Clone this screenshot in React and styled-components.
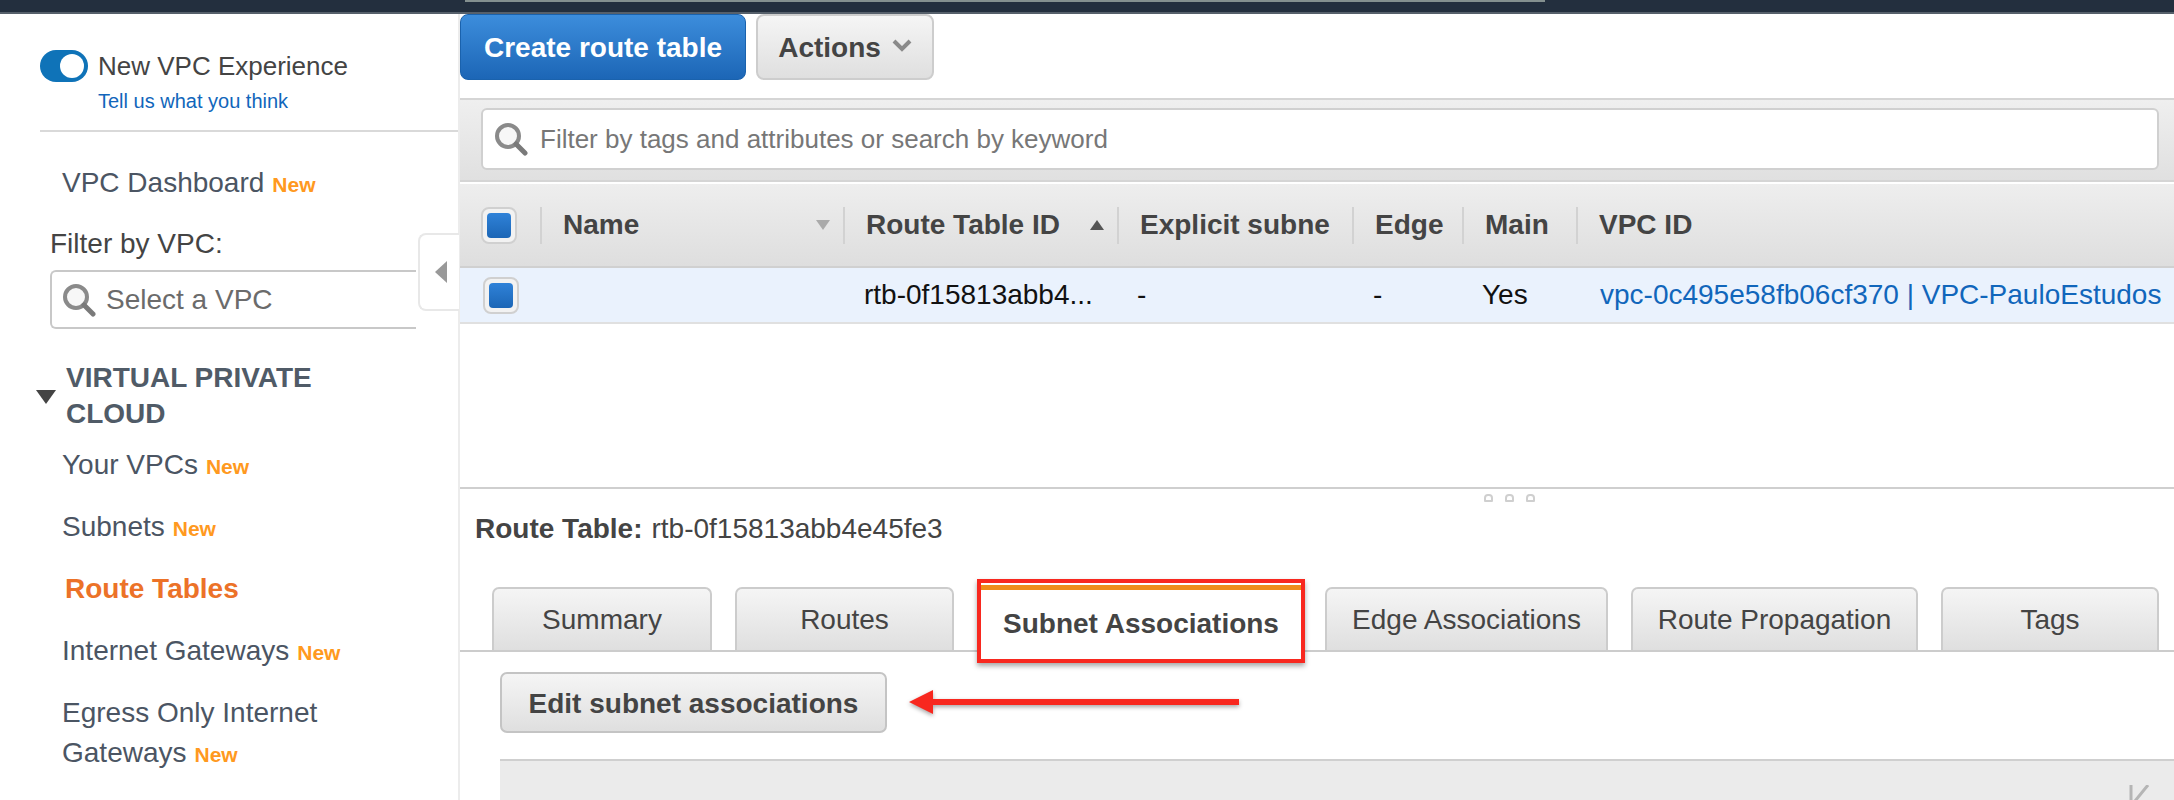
import React from "react";
import styled, { createGlobalStyle } from "styled-components";

const GlobalStyle = createGlobalStyle`
  html, body {
    margin: 0;
    padding: 0;
    background: #fff;
    font-family: "Liberation Sans", Arial, sans-serif;
  }
`;

/* Start page styling */
const Page = styled.div`
  width: 2174px;
  height: 800px;
  overflow: hidden;
  display: flex;
  flex-direction: column;
`;

const TopBar = styled.div`
  flex: none;
  height: 12px;
  background: #232f3e;
  border-bottom: 2px solid #56606b;
  display: flex;
`;

const TopBarSearch = styled.div`
  width: 1080px;
  height: 2px;
  margin-left: 465px;
  background: #84908f;
`;

const Body = styled.div`
  flex: 1;
  display: flex;
  min-height: 0;
`;

const Sidebar = styled.aside`
  flex: none;
  width: 458px;
  border-right: 2px solid #ececec;
  position: relative;
`;

const ExperienceBlock = styled.div`
  margin-left: 40px;
  padding-top: 36px;
  height: 80px;
  border-bottom: 2px solid #d9d9d9;
`;

const ToggleRow = styled.div`
  display: flex;
  align-items: center;
  gap: 10px;
`;

const Toggle = styled.span`
  width: 48px;
  height: 32px;
  border-radius: 16px;
  background: #0f73b8;
  display: flex;
  align-items: center;
  justify-content: flex-end;
  padding-right: 4px;
  box-sizing: border-box;
  &::after {
    content: "";
    width: 24px;
    height: 24px;
    border-radius: 50%;
    background: #fff;
  }
`;

const ToggleLabel = styled.span`
  font-size: 26px;
  line-height: 32px;
  color: #444;
`;

const FeedbackLink = styled.a`
  display: block;
  margin: 7px 0 0 58px;
  font-size: 20px;
  line-height: 24px;
  color: #1166bb;
`;

const NavLink = styled.div`
  margin-left: 62px;
  font-size: 28px;
  line-height: 40px;
  color: #4b5563;
  width: 360px;
`;

const NewBadge = styled.span`
  margin-left: 8px;
  font-size: 21px;
  line-height: 1;
  font-weight: bold;
  color: #ff9920;
`;

const DashboardLink = styled(NavLink)`
  margin-top: 31px;
`;

const FilterLabel = styled.div`
  margin: 21px 0 0 50px;
  font-size: 28px;
  line-height: 40px;
  color: #444;
`;

const VpcSelect = styled.div`
  margin: 6px 0 0 50px;
  width: 366px;
  height: 59px;
  box-sizing: border-box;
  border: 2px solid #c8c8c8;
  border-right: none;
  border-radius: 6px 0 0 6px;
  display: flex;
  align-items: center;
  gap: 10px;
  padding-left: 10px;
  font-size: 28px;
  color: #6b6b6b;
`;

const CollapseHandle = styled.div`
  position: absolute;
  top: 219px;
  left: 418px;
  width: 41px;
  height: 78px;
  box-sizing: border-box;
  background: #fff;
  border: 2px solid #e8e8e8;
  border-right: none;
  border-radius: 8px 0 0 8px;
  display: flex;
  align-items: center;
  justify-content: center;
  &::after {
    content: "";
    margin-left: 2px;
    border-style: solid;
    border-width: 11px 12px 11px 0;
    border-color: transparent #999 transparent transparent;
  }
`;

const SectionHeading = styled.div`
  margin-top: 31px;
  display: flex;
  align-items: center;
  gap: 10px;
  padding-left: 36px;
  font-size: 28px;
  font-weight: bold;
  line-height: 36px;
  color: #505b67;
`;

const SectionArrow = styled.span`
  flex: none;
  width: 0;
  height: 0;
  border-style: solid;
  border-width: 14px 10px 0 10px;
  border-color: #444 transparent transparent transparent;
  margin-top: 2px;
`;

const NavList = styled.div`
  margin-top: 13px;
  display: flex;
  flex-direction: column;
  gap: 22px;
`;

const ActiveNavLink = styled(NavLink)`
  margin-left: 65px;
  font-weight: bold;
  color: #ec7228;
`;

const Main = styled.main`
  flex: 1;
  min-width: 0;
  display: flex;
  flex-direction: column;
`;

const Toolbar = styled.div`
  flex: none;
  height: 84px;
  display: flex;
  align-items: flex-start;
  gap: 10px;
`;

const PrimaryButton = styled.button`
  width: 286px;
  height: 66px;
  padding: 2px 0 0;
  border: 1px solid #1a62ad;
  border-radius: 8px;
  background: linear-gradient(#3c8ddc, #1c66b6);
  color: #fff;
  font: bold 28px "Liberation Sans", Arial, sans-serif;
`;

const GreyButton = styled.button`
  border: 2px solid #cdcdcd;
  border-radius: 8px;
  background: linear-gradient(#f5f5f5, #dfdfdf);
  color: #444;
  font: bold 28px "Liberation Sans", Arial, sans-serif;
  padding: 2px 0 0;
`;

const ActionsButton = styled(GreyButton)`
  width: 178px;
  height: 66px;
  display: flex;
  align-items: center;
  justify-content: center;
  gap: 11px;
  svg {
    margin-bottom: 4px;
  }
`;

const FilterBand = styled.div`
  flex: none;
  height: 84px;
  box-sizing: border-box;
  border-top: 2px solid #d5d5d5;
  border-bottom: 2px solid #d5d5d5;
  background: linear-gradient(#efefef, #e0e0e0);
  padding: 8px 15px 10px 21px;
`;

const FilterInput = styled.div`
  height: 62px;
  box-sizing: border-box;
  background: #fff;
  border: 2px solid #d0d0d0;
  border-radius: 6px;
  display: flex;
  align-items: center;
  gap: 12px;
  padding-left: 11px;
  font-size: 26px;
  color: #777;
`;

const columns = "80px 303px 274px 235px 110px 114px 1fr";

const HeaderRow = styled.div`
  flex: none;
  margin-top: 2px;
  height: 84px;
  box-sizing: border-box;
  border-bottom: 2px solid #d0d0d0;
  background: linear-gradient(#eeeeee, #dedede);
  display: grid;
  grid-template-columns: ${columns};
  align-items: center;
`;

const HeaderCell = styled.div`
  height: 37px;
  box-sizing: border-box;
  border-left: 2px solid #d2d2d2;
  padding: 0 12px 0 21px;
  display: flex;
  align-items: center;
  justify-content: space-between;
  font-size: 28px;
  font-weight: bold;
  color: #444;
  white-space: nowrap;
  overflow: hidden;
`;

const CheckCell = styled.div`
  padding-left: ${(props) => props.$left}px;
`;

const Checkbox = styled.span`
  display: block;
  width: 36px;
  height: 37px;
  box-sizing: border-box;
  padding: 4px;
  background: #f2f2f2;
  border: 2px solid #d0d0d0;
  border-radius: 8px;
  &::after {
    content: "";
    display: block;
    width: 100%;
    height: 100%;
    border-radius: 4px;
    background: linear-gradient(#2f82d8, #1c66b6);
  }
`;

const DataRow = styled.div`
  flex: none;
  height: 56px;
  box-sizing: border-box;
  border-bottom: 2px solid #e0e0e0;
  background: #eaf2fd;
  display: grid;
  grid-template-columns: ${columns};
  align-items: center;
`;

const DataCell = styled.div`
  padding-left: ${(props) => props.$left || 22}px;
  font-size: 28px;
  color: #111;
  white-space: nowrap;
`;

const VpcLink = styled.a`
  color: #1166bb;
`;

const EmptyList = styled.div`
  flex: none;
  height: 163px;
  border-bottom: 2px solid #cfcfcf;
`;

const SplitterDots = styled.div`
  flex: none;
  height: 13px;
  padding: 5px 0 0 1024px;
  display: flex;
  gap: 12px;
`;

const SplitterDot = styled.span`
  width: 9px;
  height: 8px;
  box-sizing: border-box;
  border: 2px solid #cfcfcf;
  border-radius: 4px 4px 1px 1px;
`;

const DetailTitle = styled.div`
  flex: none;
  margin: 1px 0 0 15px;
  height: 42px;
  line-height: 42px;
  font-size: 28px;
  color: #444;
`;

const DetailLabel = styled.b`
  margin-right: 9px;
`;

const TabBar = styled.div`
  flex: none;
  margin-top: 37px;
  height: 63px;
  border-bottom: 2px solid #cccccc;
  padding-left: 32px;
  display: flex;
  gap: 23px;
`;

const Tab = styled.div`
  flex: none;
  width: ${(props) => props.$width}px;
  height: 63px;
  box-sizing: border-box;
  border: 2px solid #cccccc;
  border-bottom: none;
  border-radius: 7px 7px 0 0;
  background: linear-gradient(#f5f5f5, #dfdfdf);
  display: flex;
  align-items: center;
  justify-content: center;
  font-size: 28px;
  color: #444;
`;

const HighlightBox = styled.div`
  flex: none;
  width: 328px;
  height: 84px;
  box-sizing: border-box;
  margin: -8px -3px 0 0;
  border: 4px solid #f8281f;
  box-shadow: 0 3px 5px rgba(0, 0, 0, 0.35);
  background: #fff;
  position: relative;
  display: flex;
  flex-direction: column;
`;

const ActiveTab = styled.div`
  flex: 1;
  border-top: 5px solid #ef8c1a;
  margin-top: 2px;
  background: #fff;
  display: flex;
  align-items: center;
  justify-content: center;
  padding-bottom: 2px;
  font-size: 28px;
  font-weight: bold;
  color: #444;
`;

const ActionRow = styled.div`
  flex: none;
  margin-top: 20px;
  padding-left: 40px;
  display: flex;
  align-items: center;
  gap: 20px;
`;

const EditButton = styled(GreyButton)`
  width: 387px;
  height: 61px;
  border-radius: 7px;
  border-color: #c4c4c4;
`;

const BottomPanel = styled.div`
  flex: 1;
  margin: 26px 0 0 40px;
  border-top: 2px solid #cfcfcf;
  background: #ebebeb;
  display: flex;
  justify-content: flex-end;
  padding: 24px 22px 0 0;
`;
/* End page styling */

const SearchIcon = ({ size }) => (
  <svg width={size} height={size} viewBox="0 0 34 34" fill="none">
    <circle cx="14" cy="14" r="11" stroke="#8a8a8a" strokeWidth="4" fill="#f7f7f7" />
    <path d="M22 22l9 9" stroke="#7a7a7a" strokeWidth="5" strokeLinecap="round" />
  </svg>
);

const SortArrow = ({ up, color }) => (
  <svg width="16" height="10" viewBox="0 0 16 10">
    <path d={up ? "M8 0l7 10H1z" : "M1 0h14L8 10z"} fill={color} />
  </svg>
);

const navItems = [
  { label: "Your VPCs", isNew: true },
  { label: "Subnets", isNew: true },
  { label: "Route Tables", active: true },
  { label: "Internet Gateways", isNew: true },
  { label: "Egress Only Internet Gateways", isNew: true },
];

const App = () => (
  <Page>
    <GlobalStyle />
    <TopBar>
      <TopBarSearch />
    </TopBar>
    <Body>
      <Sidebar>
        <ExperienceBlock>
          <ToggleRow>
            <Toggle />
            <ToggleLabel>New VPC Experience</ToggleLabel>
          </ToggleRow>
          <FeedbackLink>Tell us what you think</FeedbackLink>
        </ExperienceBlock>
        <DashboardLink>
          VPC Dashboard<NewBadge>New</NewBadge>
        </DashboardLink>
        <FilterLabel>Filter by VPC:</FilterLabel>
        <VpcSelect>
          <SearchIcon size={34} />
          Select a VPC
        </VpcSelect>
        <CollapseHandle />
        <SectionHeading>
          <SectionArrow />
          <span>
            VIRTUAL PRIVATE
            <br />
            CLOUD
          </span>
        </SectionHeading>
        <NavList>
          {navItems.map((item) =>
            item.active ? (
              <ActiveNavLink key={item.label}>{item.label}</ActiveNavLink>
            ) : (
              <NavLink key={item.label}>
                {item.label}
                {item.isNew && <NewBadge>New</NewBadge>}
              </NavLink>
            )
          )}
        </NavList>
      </Sidebar>
      <Main>
        <Toolbar>
          <PrimaryButton>Create route table</PrimaryButton>
          <ActionsButton>
            Actions
            <svg width="20" height="14" viewBox="0 0 20 14" fill="none">
              <path d="M2 2l8 8 8-8" stroke="#8a8a8a" strokeWidth="4" />
            </svg>
          </ActionsButton>
        </Toolbar>
        <FilterBand>
          <FilterInput>
            <SearchIcon size={34} />
            Filter by tags and attributes or search by keyword
          </FilterInput>
        </FilterBand>
        <HeaderRow>
          <CheckCell $left={21}>
            <Checkbox />
          </CheckCell>
          <HeaderCell>
            Name
            <SortArrow color="#aaa" />
          </HeaderCell>
          <HeaderCell>
            Route Table ID
            <SortArrow up color="#555" />
          </HeaderCell>
          <HeaderCell>Explicit subne</HeaderCell>
          <HeaderCell>Edge</HeaderCell>
          <HeaderCell>Main</HeaderCell>
          <HeaderCell>VPC ID</HeaderCell>
        </HeaderRow>
        <DataRow>
          <CheckCell $left={23}>
            <Checkbox />
          </CheckCell>
          <DataCell />
          <DataCell $left={21}>rtb-0f15813abb4...</DataCell>
          <DataCell $left={20}>-</DataCell>
          <DataCell $left={21}>-</DataCell>
          <DataCell $left={20}>Yes</DataCell>
          <DataCell $left={24}>
            <VpcLink>vpc-0c495e58fb06cf370 | VPC-PauloEstudos</VpcLink>
          </DataCell>
        </DataRow>
        <EmptyList />
        <SplitterDots>
          <SplitterDot />
          <SplitterDot />
          <SplitterDot />
        </SplitterDots>
        <DetailTitle>
          <DetailLabel>Route Table:</DetailLabel>rtb-0f15813abb4e45fe3
        </DetailTitle>
        <TabBar>
          <Tab $width={220}>Summary</Tab>
          <Tab $width={219}>Routes</Tab>
          <HighlightBox>
            <ActiveTab>Subnet Associations</ActiveTab>
          </HighlightBox>
          <Tab $width={283}>Edge Associations</Tab>
          <Tab $width={287}>Route Propagation</Tab>
          <Tab $width={218}>Tags</Tab>
        </TabBar>
        <ActionRow>
          <EditButton>Edit subnet associations</EditButton>
          <svg
            width="336"
            height="36"
            viewBox="0 0 336 36"
            style={{ filter: "drop-shadow(0 2px 2px rgba(0,0,0,0.35))" }}
          >
            <path d="M2 17L26 5v9h306v6H26v9z" fill="#f8281f" />
          </svg>
        </ActionRow>
        <BottomPanel>
          <svg width="24" height="24" viewBox="0 0 24 24" fill="none">
            <path d="M3 0v24M20 0L7 16" stroke="#b5b5b5" strokeWidth="3" />
          </svg>
        </BottomPanel>
      </Main>
    </Body>
  </Page>
);

export default App;
